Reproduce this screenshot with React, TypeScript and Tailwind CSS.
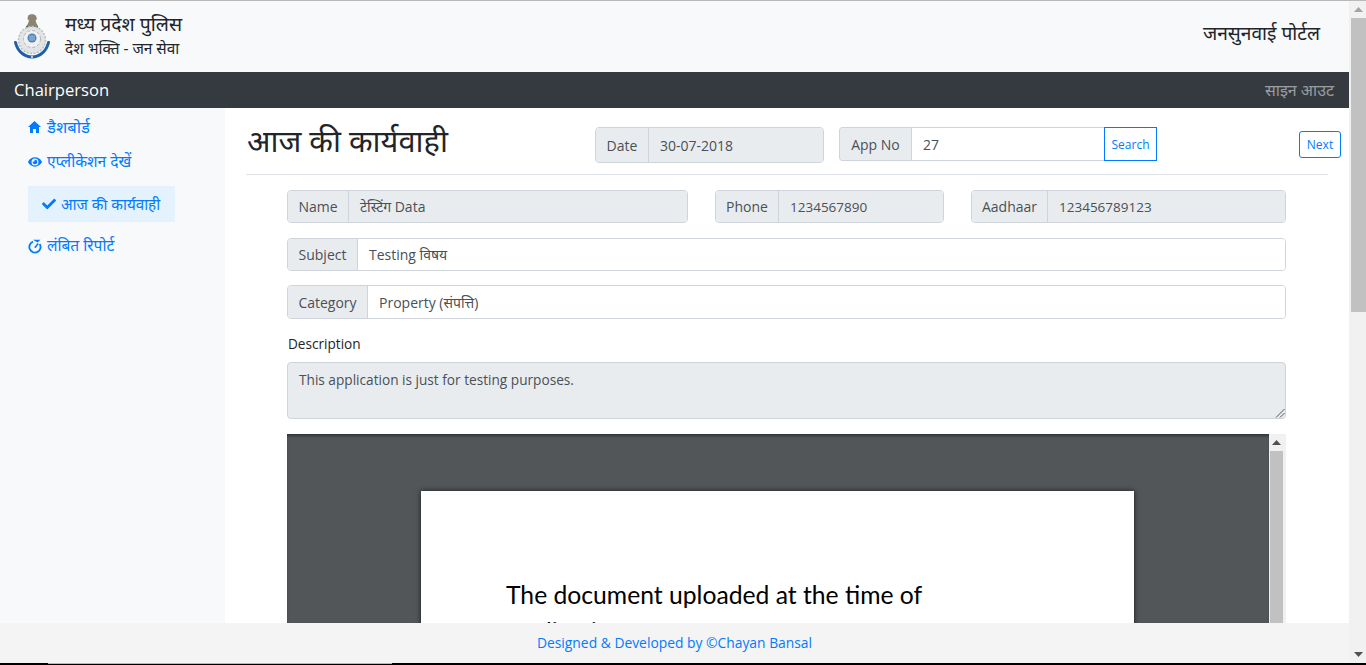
import { FaCheck, FaEye } from "react-icons/fa";

function Emblem() {
  return (
    <svg width="36" height="47" viewBox="0 0 36 47" className="mt-[2px] shrink-0">
      {/* lion capital */}
      <path d="M14 3c1-2.500 7-2.500 8 0l1 3-1.500 1.500 1 3 1.500 2.500H12.500l1.500-2.500 1-3L13.500 6z" fill="#8a8470" />
      <rect x="12" y="13" width="12" height="2" fill="#66624f" />
      {/* wheel */}
      <circle cx="18" cy="27" r="13.500" fill="#e2e3e4" />
      <circle cx="18" cy="27" r="13.500" fill="none" stroke="#bcbec0" strokeWidth="1.500" strokeDasharray="2 1.500" />
      <circle cx="18" cy="26" r="8.500" fill="#f0f0f0" stroke="#b3b5b8" strokeWidth="1" strokeDasharray="3 2" />
      <circle cx="18" cy="25" r="4.500" fill="#4a80b8" />
      <path d="M16 22.500v5M18 22v6M20 22.500v5" stroke="#dbe6f1" strokeWidth="0.700" />
      {/* ribbon */}
      <path d="M1.500 29.500C3.500 38 10 44 18 44s14.500-6 16.500-14.500" fill="none" stroke="#1f5ea8" strokeWidth="3" strokeLinecap="round" />
      <circle cx="18" cy="44" r="0.900" fill="#ffffff" />
    </svg>
  );
}

function HomeIcon() {
  return (
    <svg width="13" height="12" viewBox="0 0 13 12" className="shrink-0">
      <path d="M6.500 0L13 6h-2v6H8V8H5v4H2V6H0z" fill="#007bff" />
    </svg>
  );
}

function PendingIcon() {
  return (
    <svg width="14" height="15" viewBox="0 0 14 15" fill="none" className="shrink-0">
      <path d="M5 2.700a5.600 5.600 0 1 0 6.700 2.300" stroke="#007bff" strokeWidth="1.800" />
      <path d="M5 .800h7.500L9.500 3.600z" fill="#007bff" />
      <path d="M6.800 8.800l3.400-4.200" stroke="#007bff" strokeWidth="1.600" />
    </svg>
  );
}

function Triangle({ down = false, color = "#505050" }: { down?: boolean; color?: string }) {
  return (
    <svg width="9" height="5" viewBox="0 0 9 5">
      <path d={down ? "M0 0h9L4.500 5z" : "M0 5h9L4.500 0z"} fill={color} />
    </svg>
  );
}

function Field({
  label,
  value,
  labelClass,
  className,
  valueClass = "bg-[#e9ecef]",
}: {
  label: string;
  value: string;
  labelClass: string;
  className: string;
  valueClass?: string;
}) {
  return (
    <div className={`flex overflow-hidden rounded border border-[#ced4da] text-[14px] text-[#495057] ${className}`}>
      <div className={`flex shrink-0 items-center justify-center border-r border-[#ced4da] bg-[#e9ecef] ${labelClass}`}>
        {label}
      </div>
      <div className={`flex flex-1 items-center pl-[11px] ${valueClass}`}>{value}</div>
    </div>
  );
}

function Sidebar() {
  return (
    <aside className="flex w-[225px] shrink-0 flex-col bg-[#f8f9fa] pl-[28px] pt-px text-[15.5px] text-[#007bff]">
      <div className="flex h-[36px] items-center gap-[6px]">
        <HomeIcon />
        <span className="text-[16.6px]">डैशबोर्ड</span>
      </div>
      <div className="flex h-[34px] items-center gap-[5px]">
        <FaEye className="text-[14px]" />
        <span>एप्लीकेशन देखें</span>
      </div>
      <div className="mt-[7px] flex h-[36px] w-[147px] items-center gap-[5px] bg-[#e3f2fd] pl-[14px] text-[15.2px]">
        <FaCheck className="text-[14px]" />
        <span>आज की कार्यवाही</span>
      </div>
      <div className="mt-[7px] flex h-[34px] items-center gap-[5px]">
        <PendingIcon />
        <span>लंबित रिपोर्ट</span>
      </div>
    </aside>
  );
}

function PdfViewer() {
  return (
    <div className="mt-[15px] flex h-[240px] overflow-hidden">
      <div className="flex-1 bg-[#525659] pl-[134px] pt-[57px] shadow-[inset_0_3px_3px_-1px_rgba(0,0,0,0.4)]">
        <div className="h-[300px] w-[713px] bg-white pl-[85px] pt-[85px] font-['Lato',sans-serif] text-[24.7px] leading-[37px] text-black shadow-[0_0_5px_rgba(0,0,0,0.7)]">
          <p className="w-[430px]">The document uploaded at the time of application</p>
        </div>
      </div>
      <div className="flex w-[17px] flex-col items-center bg-[#f1f1f1] pr-[2px]">
        <div className="flex h-[17px] items-center">
          <Triangle />
        </div>
        <div className="h-[200px] w-[13px] bg-[#c1c1c1]" />
      </div>
    </div>
  );
}

export default function App() {
  return (
    <div className="relative flex h-[665px] w-full flex-col overflow-hidden bg-white font-['Open_Sans','Noto_Sans',sans-serif]">
      <div className="h-px shrink-0 bg-[#b8b8b8]" />
      <div className="flex min-h-0 flex-1">
        <div className="flex min-w-0 flex-1 flex-col">
          <header className="flex h-[71px] shrink-0 items-start justify-between bg-[#f8f9fa] pl-[14px] pr-[29px] pt-[10px] text-[#212529]">
            <div className="flex items-start gap-[15px]">
              <Emblem />
              <div className="flex flex-col">
                <span className="text-[19.4px] leading-[26px]">मध्य प्रदेश पुलिस</span>
                <span className="text-[15.4px] leading-[24px]">देश भक्ति - जन सेवा</span>
              </div>
            </div>
            <span className="mt-[8px] text-[19.2px] leading-[28px]">जनसुनवाई पोर्टल</span>
          </header>

          <nav className="flex h-[36px] shrink-0 items-center justify-between bg-[#343a40] pl-[14px] pr-[15px]">
            <span className="pt-px text-[16.6px] text-white">Chairperson</span>
            <span className="text-[16px] text-white/50">साइन आउट</span>
          </nav>

          <div className="flex min-h-0 flex-1">
            <Sidebar />
            <main className="min-w-0 flex-1 overflow-hidden">
              <div className="relative mx-[21px] flex h-[67px] items-start border-b border-[#dee2e6]">
                <h1 className="ml-px mt-[8px] w-[348px] text-[30.8px] leading-[48px] text-[#212529]">आज की कार्यवाही</h1>
                <Field
                  label="Date"
                  value="30-07-2018"
                  labelClass="w-[53px]"
                  className="mt-[19px] h-[36px] w-[229px]"
                />
                <div className="ml-[15px] mt-[19px] flex h-[34px]">
                  <Field
                    label="App No"
                    value="27"
                    labelClass="w-[72px]"
                    className="w-[265px] rounded-r-none border-r-0"
                    valueClass="bg-white"
                  />
                  <div className="flex w-[53px] items-center justify-center border border-[#007bff] pt-px text-[12px] text-[#007bff]">
                    Search
                  </div>
                </div>
                <div className="absolute right-[-13px] top-[23px] flex h-[27px] w-[42px] items-center justify-center rounded-[3px] border border-[#007bff] text-[12px] text-[#007bff]">
                  Next
                </div>
              </div>

              <div className="ml-[62px] mt-[15px] flex w-[999px] flex-col">
                <div className="flex gap-[27px]">
                  <Field label="Name" value="टेस्टिंग Data" labelClass="w-[61px]" className="h-[33px] w-[401px]" />
                  <Field
                    label="Phone"
                    value="1234567890"
                    labelClass="w-[63px]"
                    className="h-[33px] w-[229px]"
                    valueClass="bg-[#e9ecef] pt-px text-[13.5px]"
                  />
                  <Field
                    label="Aadhaar"
                    value="123456789123"
                    labelClass="w-[76px]"
                    className="h-[33px] w-[315px]"
                    valueClass="bg-[#e9ecef] pt-px text-[13.5px]"
                  />
                </div>
                <Field
                  label="Subject"
                  value="Testing विषय"
                  labelClass="w-[70px]"
                  className="mt-[15px] h-[33px]"
                  valueClass="bg-white"
                />
                <Field
                  label="Category"
                  value="Property (संपत्ति)"
                  labelClass="w-[80px]"
                  className="mt-[14px] h-[34px]"
                  valueClass="bg-white"
                />
                <label className="mt-[14px] h-[21px] pl-px text-[13.6px] leading-[21px] text-[#212529]">Description</label>
                <div className="relative mt-[8px] h-[57px] rounded border border-[#ced4da] bg-[#e9ecef] px-[11px] py-[6px] text-[13.65px] leading-[21px] text-[#495057]">
                  This application is just for testing purposes.
                  <svg width="10" height="10" viewBox="0 0 10 10" className="absolute bottom-0 right-0">
                    <path d="M1 9.500L9.500 1M5 9.500L9.500 5" stroke="#555" strokeWidth="1" />
                  </svg>
                </div>
                <PdfViewer />
              </div>
            </main>
          </div>
        </div>

        {/* page scrollbar */}
        <div className="flex w-[17px] shrink-0 flex-col items-center justify-between bg-[#f1f1f1] pl-[2px]">
          <div className="flex w-full flex-col items-center">
            <div className="flex h-[17px] items-center">
              <Triangle color="#a3a3a3" />
            </div>
            <div className="h-[294px] w-full bg-[#c1c1c1]" />
          </div>
          <div className="flex h-[17px] items-center">
            <Triangle down />
          </div>
        </div>
      </div>

      {/* bottom edge of the window */}
      <div className="flex h-[2px] shrink-0 bg-black">
        <div className="ml-[48px] h-px w-[344px] bg-[#b8b8b8]" />
      </div>

      <footer className="absolute bottom-[2px] left-0 flex h-[40px] w-[1349px] items-center justify-center bg-[#f4f4f4] pt-px text-[13.85px] text-[#007bff]">
        Designed &amp; Developed by ©Chayan Bansal
      </footer>
    </div>
  );
}
